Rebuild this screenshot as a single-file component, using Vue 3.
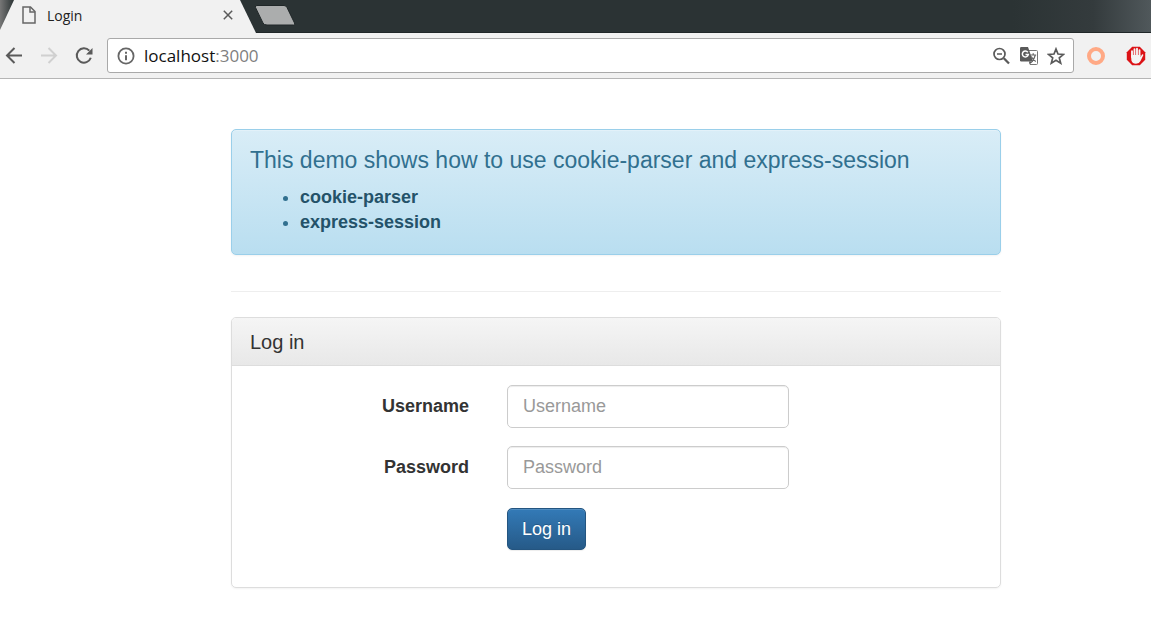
<script setup>
import { ref } from 'vue'

const address = 'localhost'
const port = ':3000'
const packages = ['cookie-parser', 'express-session']
const username = ref('')
const password = ref('')
</script>

<template>
  <div class="window">
    <header class="browser">
      <div class="tabs">
        <div class="tab">
          <svg class="page-icon" width="14" height="18" viewBox="0 0 14 18" fill="none" stroke="#666" stroke-width="1.500">
            <path d="M1 1h7.500L13 5.500V17H1z" />
            <path d="M8 1v5h5" />
          </svg>
          <span class="tab-title">Login</span>
          <button class="plain" type="button" aria-label="Close tab">
            <svg width="10" height="10" viewBox="0 0 10 10" stroke="#5a5a5a" stroke-width="1.500">
              <path d="M.8.8l8.400 8.400M9.200.8L.8 9.200" />
            </svg>
          </button>
        </div>
        <button class="plain new-tab" type="button" aria-label="New tab">
          <svg width="42" height="21" viewBox="0 0 42 21">
            <path d="M3 .5h27q2 0 3 2l7.500 15.500q1 2-1 2H13q-3 0-4-2L1.500 2.500Q.7.5 3 .5z" fill="#abadad" stroke="#202728" />
          </svg>
        </button>
      </div>
      <div class="toolbar">
        <nav class="nav">
          <button class="plain" type="button" aria-label="Back">
            <svg width="18" height="18" viewBox="0 0 18 18" fill="none" stroke="#5a5a5a" stroke-width="2">
              <path d="M17 8.500H2.500M9.500 1L2 8.500L9.500 16" />
            </svg>
          </button>
          <button class="plain" type="button" aria-label="Forward" disabled>
            <svg width="18" height="18" viewBox="0 0 18 18" fill="none" stroke="#d0d0d0" stroke-width="2">
              <path d="M1 8.500h14.500M8.500 1L16 8.500L8.500 16" />
            </svg>
          </button>
          <button class="plain" type="button" aria-label="Reload">
            <svg width="18" height="18" viewBox="0 0 18 18">
              <path d="M14.300 3.600A7.200 7.200 0 1 0 15.800 10.800" fill="none" stroke="#5a5a5a" stroke-width="2" />
              <path d="M17.500 1v6.500H11z" fill="#5a5a5a" />
            </svg>
          </button>
        </nav>
        <div class="omnibox">
          <svg width="18" height="18" viewBox="0 0 18 18">
            <circle cx="9" cy="9" r="7.600" fill="none" stroke="#666" stroke-width="1.800" />
            <path d="M8 4.800h2v2H8zM8 8.200h2v5H8z" fill="#666" />
          </svg>
          <span class="url">{{ address }}<span class="port">{{ port }}</span></span>
          <button class="plain" type="button" aria-label="Zoom">
            <svg width="18" height="18" viewBox="0 0 18 18" fill="none" stroke="#5a5a5a">
              <circle cx="6.500" cy="7" r="5.500" stroke-width="1.700" />
              <path d="M4 7h5" stroke-width="1.500" />
              <path d="M10.800 11.300L16 16.500" stroke-width="2.300" />
            </svg>
          </button>
          <button class="plain" type="button" aria-label="Translate">
            <svg width="18" height="18" viewBox="0 0 18 18">
              <path d="M8 3.500h8.500q1 0 1 1v12q0 1-1 1H10" fill="#fff" stroke="#777" />
              <path d="M1.200 0H8l5 14.500H1.200Q0 14.500 0 13.300V1.200Q0 0 1.200 0z" fill="#5a5a5a" />
              <path d="M7.800 5.200A3 3 0 1 0 8.300 7.600H5.500" fill="none" stroke="#fff" stroke-width="1.500" />
              <path d="M9.500 17.500l3.500-3H9z" fill="#5a5a5a" />
              <path d="M10.200 8h6M13.200 6.300V8M15.300 8q-1 4-3.300 6.500M11.300 9.500q1.700 3.500 4.500 5" fill="none" stroke="#666" stroke-width="1.200" />
            </svg>
          </button>
          <button class="plain" type="button" aria-label="Bookmark this page">
            <svg width="18" height="18" viewBox="0 0 18 18">
              <path d="M9 2l2 5 5.500.4-4.200 3.500 1.400 5.300L9 13.300l-4.700 2.900 1.400-5.300L1.500 7.400 7 7z" fill="none" stroke="#5a5a5a" stroke-width="1.700" />
            </svg>
          </button>
        </div>
        <div class="extensions">
          <button class="plain" type="button" aria-label="Ring extension">
            <svg width="18" height="18" viewBox="0 0 18 18">
              <circle cx="9" cy="9" r="7" fill="none" stroke="#ffa985" stroke-width="4" />
            </svg>
          </button>
          <button class="plain" type="button" aria-label="Ad blocker">
            <svg width="20" height="20" viewBox="0 0 20 20">
              <path d="M6.200.8h7.600l5.400 5.400v7.600l-5.400 5.400H6.200L.8 13.800V6.200z" fill="#dc1216" />
              <path d="M6 11V5.200M8.500 10V3.200M11 10V2.800M13.500 10V4.200" stroke="#f4f4f4" stroke-width="1.900" stroke-linecap="round" />
              <path d="M5 9h9.400v2.200l1.600-2.600q1.400-.8 1.300.6L14.500 15q-1.200 2.700-4.500 2.700-3.500 0-4.600-3.200z" fill="#f4f4f4" />
            </svg>
          </button>
        </div>
      </div>
    </header>

    <main class="content">
      <section class="alert">
        <h4>This demo shows how to use cookie-parser and express-session</h4>
        <ul>
          <li v-for="name in packages" :key="name"><strong>{{ name }}</strong></li>
        </ul>
      </section>
      <hr />
      <section class="panel">
        <h3 class="panel-heading">Log in</h3>
        <form class="form" @submit.prevent>
          <label for="username">Username</label>
          <input id="username" v-model="username" type="text" placeholder="Username" />
          <label for="password">Password</label>
          <input id="password" v-model="password" type="password" placeholder="Password" />
          <button class="submit" type="submit">Log in</button>
        </form>
      </section>
    </main>
  </div>
</template>

<style>
body {
  background: #fff;
}
</style>

<style scoped>
.window,
.window * {
  box-sizing: border-box;
}
.window {
  font: 18px/25px "Liberation Sans", Arial, sans-serif;
  color: #333;
}
.plain {
  display: flex;
  padding: 0;
  border: 0;
  background: none;
}
.browser {
  font-family: "Open Sans", "Noto Sans", sans-serif;
}
.tabs {
  display: flex;
  height: 33px;
  background: linear-gradient(90deg, #777 0, #2b3334 14px, #2b3334 88%, #343b3d 95%, #50585b);
  border-bottom: 1px solid #202728;
}
.tab {
  display: flex;
  align-items: center;
  width: 256px;
  height: 33px;
  padding: 0 23px 3px 22px;
  background: #f1f1f1;
  clip-path: polygon(14px 0, 240px 0, 256px 100%, 0 100%, 0 30px);
}
.tab-title {
  flex: 1;
  margin-left: 11px;
  font-size: 14px;
  color: #222;
}
.new-tab {
  align-self: flex-start;
  margin: 5px 0 0 -2px;
}
.toolbar {
  display: flex;
  align-items: center;
  height: 46px;
  padding: 0 5px;
  background: #f1f1f1;
  border-bottom: 1px solid #b5b5b5;
}
.nav {
  display: flex;
  gap: 17px;
  margin-right: 14px;
}
.omnibox {
  display: flex;
  flex: 1;
  align-items: center;
  gap: 9px;
  height: 35px;
  padding: 0 8px 0 9px;
  background: #fff;
  border: 1px solid #a9a9a9;
  border-radius: 3px;
}
.url {
  flex: 1;
  font-size: 17px;
  color: #111;
}
.port {
  color: #808080;
}
.extensions {
  display: flex;
  align-items: center;
  gap: 21px;
  margin-left: 13px;
}
.content {
  padding: 50px 150px 50px 231px;
}
.alert {
  padding: 18px;
  color: #31708f;
  background: linear-gradient(#d9edf7, #b9def0);
  border: 1px solid #9acfea;
  border-radius: 5px;
  box-shadow: inset 0 1px 0 rgba(255, 255, 255, 0.25), 0 1px 2px rgba(0, 0, 0, 0.05);
}
h4 {
  margin: 0 0 12px;
  font-size: 23px;
  font-weight: 400;
  line-height: 25px;
}
ul {
  margin: 0;
  padding: 0 0 1px 50px;
}
strong {
  color: #245269;
}
hr {
  height: 1px;
  margin: 36px 0 25px;
  border: 0;
  background: #eee;
}
.panel {
  overflow: hidden;
  border: 1px solid #ddd;
  border-radius: 5px;
  box-shadow: 0 1px 2px rgba(0, 0, 0, 0.05);
}
.panel-heading {
  height: 48px;
  margin: 0;
  padding: 12px 18px;
  font-size: 20px;
  font-weight: 400;
  line-height: 24px;
  background: linear-gradient(#f5f5f5, #e8e8e8);
  border-bottom: 1px solid #ddd;
}
.form {
  display: grid;
  grid-template-columns: 275fr 282fr 211fr;
  row-gap: 18px;
  padding: 19px 0 37px;
}
label {
  grid-column: 1;
  padding: 9px 38px 0 0;
  font-weight: 700;
  text-align: right;
}
input {
  grid-column: 2;
  width: 100%;
  height: 43px;
  padding: 7px 15px;
  font: inherit;
  color: #555;
  background: #fff;
  border: 1px solid #ccc;
  border-radius: 5px;
  box-shadow: inset 0 1px 1px rgba(0, 0, 0, 0.075);
}
input::placeholder {
  color: #999;
  opacity: 1;
}
.submit {
  grid-column: 2;
  justify-self: start;
  height: 42px;
  margin-top: 1px;
  padding: 0 14px;
  font: inherit;
  color: #fff;
  text-shadow: 0 -1px 0 rgba(0, 0, 0, 0.2);
  background: linear-gradient(#337ab7, #265a88);
  border: 1px solid #245580;
  border-radius: 5px;
  box-shadow: inset 0 1px 0 rgba(255, 255, 255, 0.15), 0 1px 1px rgba(0, 0, 0, 0.075);
}
</style>
